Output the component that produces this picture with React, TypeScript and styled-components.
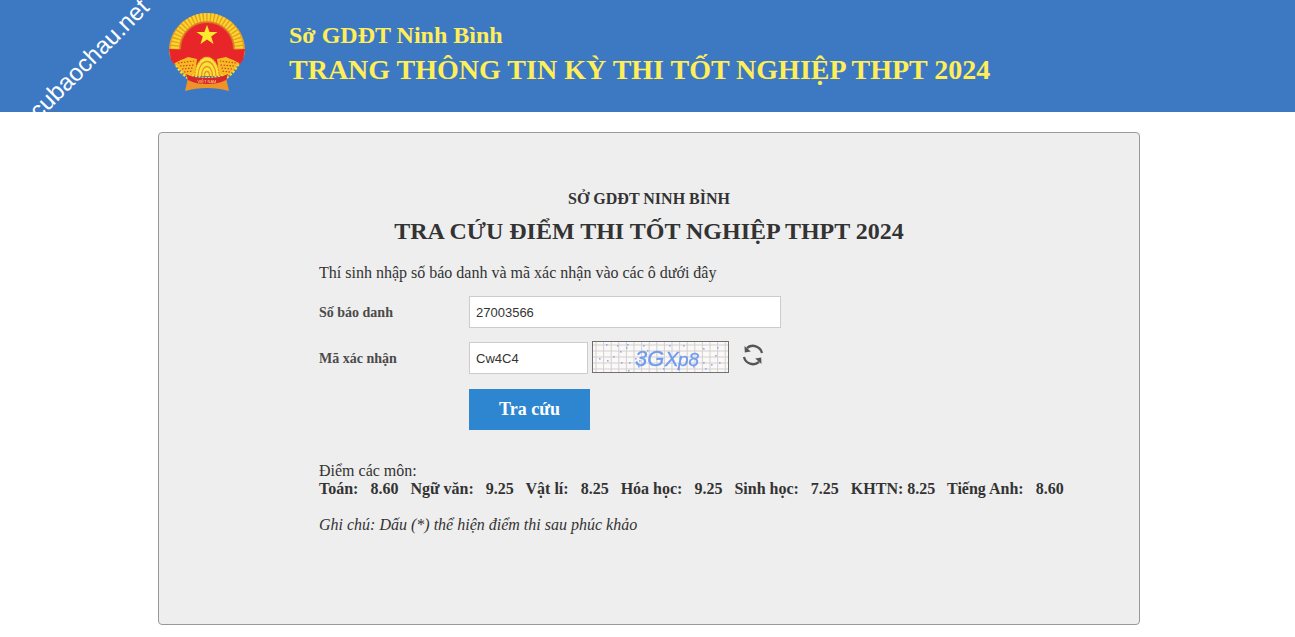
import React, { useState } from 'react'
import styled, { createGlobalStyle } from 'styled-components'

const GlobalStyle = createGlobalStyle`
  html, body {
    margin: 0;
    padding: 0;
    background: #fff;
    overflow: hidden;
  }
  body {
    font-family: "Liberation Serif", "Times New Roman", serif;
    color: #333;
  }
`

const Header = styled.header`
  position: relative;
  height: 112px;
  background: #3d79c3;
  overflow: hidden;
  display: flex;
  align-items: flex-start;
  padding-left: 168px;
  box-sizing: border-box;
`

const Watermark = styled.div`
  position: absolute;
  left: 10px;
  top: 44px;
  width: 160px;
  transform: rotate(-45deg);
  font-family: "Liberation Sans", Arial, sans-serif;
  font-size: 24px;
  line-height: 28px;
  color: #fff;
  white-space: nowrap;
`

const Emblem = styled.svg`
  margin-top: 12px;
  width: 78px;
  height: 81px;
  flex-shrink: 0;
  filter: blur(0.3px);
`

const HeaderText = styled.div`
  margin-left: 43px;
  padding-top: 21px;
  font-weight: 700;
  color: #ffee58;
`

const Dept = styled.div`
  font-size: 24px;
  line-height: 28px;
`

const SiteTitle = styled.div`
  margin-top: 4px;
  font-size: 28px;
  line-height: 34px;
  white-space: nowrap;
`

const Panel = styled.main`
  box-sizing: border-box;
  width: 982px;
  height: 493px;
  margin: 20px 0 0 158px;
  padding: 56px 160px 0;
  background: #eee;
  border: 1px solid #999;
  border-radius: 4px;
`

const Office = styled.h2`
  margin: 0;
  text-align: center;
  font-size: 16px;
  line-height: 19px;
  font-weight: 700;
`

const Heading = styled.h1`
  margin: 9px 0 0;
  text-align: center;
  font-size: 24px;
  line-height: 29px;
  font-weight: 700;
`

const Hint = styled.p`
  margin: 17px 0 0;
  font-size: 16px;
  line-height: 19px;
`

const Form = styled.form`
  margin-top: 14px;
  display: flex;
  flex-direction: column;
`

const Row = styled.div<{ $top?: number }>`
  display: flex;
  align-items: center;
  margin-top: ${({ $top }) => $top ?? 0}px;
`

const Label = styled.label`
  width: 150px;
  flex-shrink: 0;
  padding-top: 2px;
  font-size: 14px;
  font-weight: 700;
  color: #4a4a4a;
`

const Field = styled.input<{ $width: number }>`
  box-sizing: border-box;
  width: ${({ $width }) => $width}px;
  height: 32px;
  padding: 0 6px;
  background: #fff;
  border: 1px solid #ccc;
  outline: none;
  font-family: "Liberation Sans", Arial, sans-serif;
  font-size: 13px;
  color: #333;
`

const Captcha = styled.svg`
  display: block;
  box-sizing: border-box;
  margin: -2px 0 0 4px;
  width: 137px;
  height: 32px;
  background: #fbf8f8;
  border: 1px solid #707070;
  filter: blur(0.2px);
`

const Refresh = styled.svg`
  margin: -7px 0 0 12px;
  width: 24px;
  height: 24px;
  color: #555;
`

const Submit = styled.button`
  width: 121px;
  height: 41px;
  margin-left: 150px;
  background: #2e86d0;
  border: none;
  color: #fff;
  font-family: inherit;
  font-size: 18px;
  font-weight: 700;
`

const Results = styled.section`
  margin-top: 32px;
  font-size: 16px;
  line-height: 18px;
`

const Scores = styled.div`
  font-weight: 700;
  white-space: pre;
`

const Note = styled.p`
  margin: 17px 0 0;
  font-size: 16px;
  line-height: 19px;
  font-style: italic;
`

const gridLines = () => {
  const lines = []
  for (let x = 3; x < 135; x += 7.6) lines.push(<line key={'v' + x} x1={x} y1={0} x2={x} y2={30} />)
  for (let y = 3; y < 30; y += 6) lines.push(<line key={'h' + y} x1={0} y1={y} x2={135} y2={y} />)
  return lines
}

const specks = [
  [13, 2], [27, 9], [36, 20], [45, 24], [33, 5], [34, 2], [54, 8], [50, 3], [20, 14], [90, 3], [110, 6],
  [122, 13], [100, 24], [112, 26], [118, 22], [35, 28], [28, 20], [76, 3], [6, 16], [42, 16], [124, 5],
  [14, 18], [24, 3], [46, 18], [110, 20], [70, 26], [85, 26], [126, 20],
]

const App: React.FC = () => {
  const [sbd, setSbd] = useState('27003566')
  const [code, setCode] = useState('Cw4C4')

  return (
    <>
      <GlobalStyle />
      <Header>
        <Watermark>cubaochau.net</Watermark>
        <Emblem viewBox="0 0 78 81">
          {/* wreath */}
          <path d="M39 1C18 1 1 18 1 38c0 6 3 12 8 17l9 9h42l9-9c5-5 8-11 8-17C77 18 60 1 39 1z" fill="#ea9f22" />
          <circle cx="39" cy="37" r="32" fill="none" stroke="#f9d62c" strokeWidth="8" strokeDasharray="2.2 1.4" />
          <circle cx="39" cy="37" r="27.5" fill="#d9732a" />
          <path d="M39 11c-15 0-26 12-26 26 0 6 2 11 5 16h42c3-5 5-10 5-16 0-14-11-26-26-26z" fill="#e8262a" />
          <polygon points="39,13 41.6,20 49.5,20 43.2,24.6 45.5,32 39,27.6 32.5,32 34.8,24.6 28.5,20 36.4,20" fill="#fde92d" />
          {/* rice and ribbons */}
          <path d="M1 37l29 1-10 6-14 8-3-4z" fill="#e8262a" />
          <path d="M77 37l-29 1 10 6 14 8 3-4z" fill="#e8262a" />
          <path d="M7 51l13-6 9 2-2 15-10 1z" fill="#f5bb22" />
          <path d="M71 51l-13-6-9 2 2 15 10 1z" fill="#f5bb22" />
          <path d="M10 51l16-2M12 54l14-1M14 57l11-1M16 60l9-1" stroke="#d8402a" strokeWidth="1.2" strokeDasharray="1.5 1.5" />
          <path d="M68 51l-16-2M66 54l-14-1M64 57l-11-1M62 60l-9-1" stroke="#d8402a" strokeWidth="1.2" strokeDasharray="1.5 1.5" />
          {/* gear */}
          <path d="M27 64a12 19 0 0 1 24 0z" fill="#f9e23a" />
          <path d="M30 64a9 14.5 0 0 1 18 0M33.5 64a5.5 9.5 0 0 1 11 0M36.5 64a2.5 4.5 0 0 1 5 0" fill="none" stroke="#ea8f27" strokeWidth="1.3" />
          <path d="M27 64a12 19 0 0 1 24 0" fill="none" stroke="#ea8f27" strokeWidth="1.2" strokeDasharray="1.6 1.2" />
          {/* banner */}
          <path d="M17 79l3-13c6 3 12 5 19 5s13-2 19-5l3 13c-7-2-14-3-22-3s-15 1-22 3z" fill="#ee9327" />
          <path d="M18 62c6 3 13 4 21 4s15-1 21-4l-2 6c-6 3-12 4-19 4s-13-1-19-4z" fill="#d8262a" />
          <text x="39" y="70.5" textAnchor="middle" fontFamily="Liberation Sans, sans-serif" fontSize="4" fill="#f9dd6a">VIỆT NAM</text>
        </Emblem>
        <HeaderText>
          <Dept>Sở GDĐT Ninh Bình</Dept>
          <SiteTitle>TRANG THÔNG TIN KỲ THI TỐT NGHIỆP THPT 2024</SiteTitle>
        </HeaderText>
      </Header>

      <Panel>
        <Office>SỞ GDĐT NINH BÌNH</Office>
        <Heading>TRA CỨU ĐIỂM THI TỐT NGHIỆP THPT 2024</Heading>
        <Hint>Thí sinh nhập số báo danh và mã xác nhận vào các ô dưới đây</Hint>
        <Form onSubmit={(e) => e.preventDefault()}>
          <Row>
            <Label htmlFor="sbd">Số báo danh</Label>
            <Field id="sbd" $width={312} value={sbd} onChange={(e) => setSbd(e.target.value)} />
          </Row>
          <Row $top={14}>
            <Label htmlFor="code">Mã xác nhận</Label>
            <Field id="code" $width={119} value={code} onChange={(e) => setCode(e.target.value)} />
            <Captcha viewBox="0 0 135 30">
              <g stroke="#d4d0d0" strokeWidth="1">{gridLines()}</g>
              <g fill="#8fb0f2">
                {specks.map(([x, y]) => (
                  <rect key={x + '-' + y} x={x} y={y} width="1.6" height="1.6" />
                ))}
              </g>
              <text x="42" y="24" fontFamily="Liberation Sans, sans-serif" fontStyle="italic" fill="#6f9bef" stroke="#6f9bef" strokeWidth="0.3">
                <tspan fontSize="22">3G</tspan>
                <tspan fontSize="21" dx="0.5">X</tspan>
                <tspan fontSize="19" dx="-1">p8</tspan>
              </text>
            </Captcha>
            <Refresh viewBox="0 0 24 24" fill="none" stroke="currentColor" strokeWidth="2.3">
              <path d="M21 10A9.3 9.3 0 0 0 6 5" />
              <path d="M3 14A9.3 9.3 0 0 0 18 19" />
              <path d="M3.5 3l.3 6.5 6-1z" fill="currentColor" stroke="none" />
              <path d="M20.5 21l-.3-6.5-6 1z" fill="currentColor" stroke="none" />
            </Refresh>
          </Row>
          <Row $top={15}>
            <Submit type="submit">Tra cứu</Submit>
          </Row>
        </Form>
        <Results>
          <div>Điểm các môn:</div>
          <Scores>Toán:   8.60   Ngữ văn:   9.25   Vật lí:   8.25   Hóa học:   9.25   Sinh học:   7.25   KHTN: 8.25   Tiếng Anh:   8.60</Scores>
          <Note>Ghi chú: Dấu (*) thể hiện điểm thi sau phúc khảo</Note>
        </Results>
      </Panel>
    </>
  )
}

export default App
